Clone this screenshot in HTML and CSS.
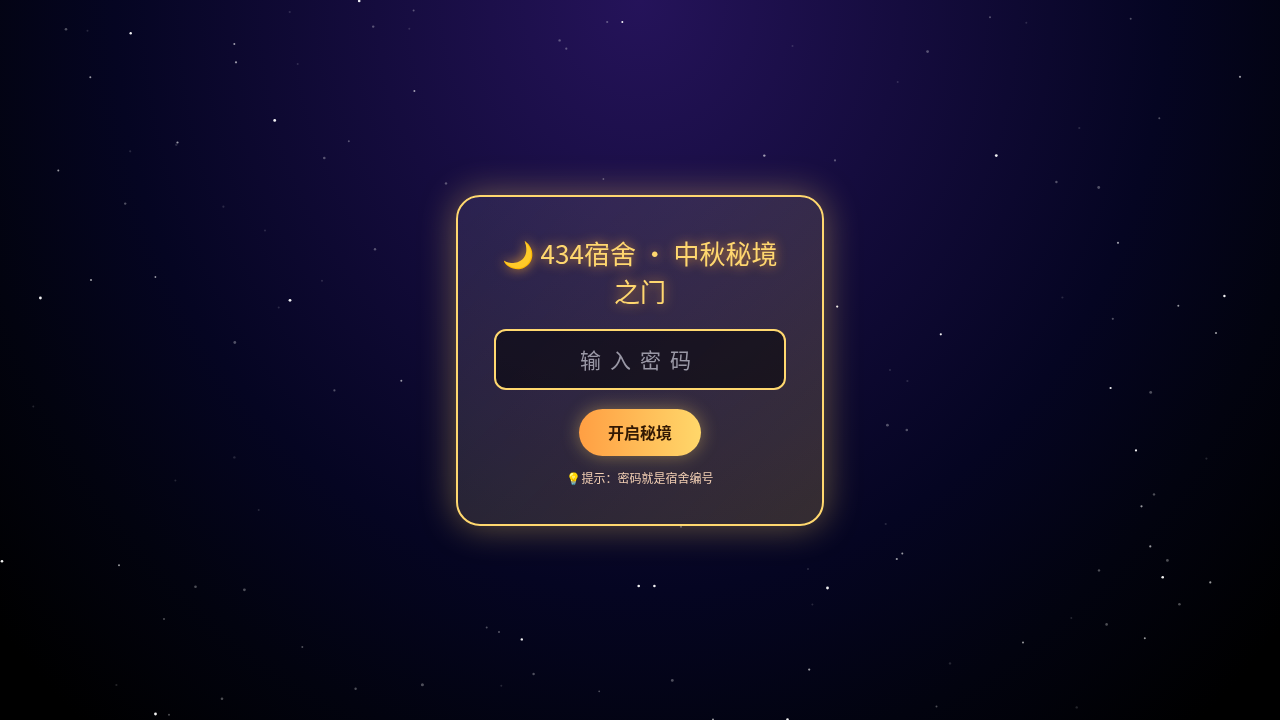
FILE: index.html
```html
<!DOCTYPE html>
<html lang="zh-CN">
<head>
<meta charset="UTF-8">
<meta name="viewport" content="width=device-width, initial-scale=1">
<title>434宿舍 · 中秋秘境之门</title>
<link rel="stylesheet" href="styles.css">
</head>
<body>
<svg class="sky" viewBox="0 0 1280 720" preserveAspectRatio="xMidYMid slice" aria-hidden="true">
  <g class="stars stars-bright">
    <circle cx="130.7" cy="33.3" r="1.2"/><circle cx="359.2" cy="1" r="1.3"/><circle cx="274.7" cy="120.4" r="1.4"/>
    <circle cx="40.4" cy="298" r="1.4"/><circle cx="290" cy="300.3" r="1.4"/><circle cx="2" cy="561.3" r="1.3"/>
    <circle cx="155.5" cy="714" r="1.4"/><circle cx="638.7" cy="586" r="1.3"/><circle cx="654.4" cy="586" r="1.3"/>
    <circle cx="827.5" cy="588" r="1.4"/><circle cx="521.8" cy="639.4" r="1.2"/><circle cx="787.5" cy="719.5" r="1.3"/>
    <circle cx="996.3" cy="155.6" r="1.4"/><circle cx="1224.4" cy="296" r="1.2"/><circle cx="1162.7" cy="577.2" r="1.3"/>
    <circle cx="1110.6" cy="388" r="1.1"/><circle cx="1136" cy="450.4" r="1.1"/><circle cx="837.2" cy="306.6" r="1.1"/>
    <circle cx="622.3" cy="22" r="1"/><circle cx="940.8" cy="334.3" r="1.1"/>
  </g>
  <g class="stars stars-medium">
    <circle cx="236" cy="62.3" r="1.1"/><circle cx="177.5" cy="142.5" r="1.1"/><circle cx="90.3" cy="77.2" r="1"/>
    <circle cx="58.3" cy="170.4" r="1"/><circle cx="91" cy="280" r="1.1"/><circle cx="155.4" cy="277" r=".9"/>
    <circle cx="401.3" cy="380.7" r="1"/><circle cx="119" cy="565.2" r="1"/><circle cx="414.4" cy="91" r="1"/>
    <circle cx="764.3" cy="155.6" r="1.2"/><circle cx="809.2" cy="669.6" r="1.1"/><circle cx="1240" cy="76.8" r="1.1"/>
    <circle cx="1178.3" cy="305.7" r="1"/><circle cx="1216" cy="333" r="1.1"/><circle cx="1141.5" cy="506.3" r="1.1"/>
    <circle cx="1150.3" cy="546.4" r="1.1"/><circle cx="1210.3" cy="582.4" r="1.1"/><circle cx="902.3" cy="553.6" r="1"/>
    <circle cx="896.8" cy="559" r="1.1"/><circle cx="1144.8" cy="638.3" r="1"/><circle cx="1023" cy="642.4" r="1"/>
    <circle cx="1118" cy="242.8" r="1.1"/><circle cx="234.3" cy="44" r="1"/><circle cx="713" cy="719.5" r="1"/>
  </g>
  <g class="stars stars-dim">
    <circle cx="66" cy="29.3" r="1.3"/><circle cx="324.3" cy="158" r="1.3"/><circle cx="125.2" cy="203.6" r="1.2"/>
    <circle cx="373.2" cy="26.6" r="1.2"/><circle cx="413.6" cy="10.4" r="1"/><circle cx="348.8" cy="141.2" r="1"/>
    <circle cx="375" cy="249.3" r="1.2"/><circle cx="234.8" cy="342.5" r="1.4"/><circle cx="334.4" cy="390.4" r="1.1"/>
    <circle cx="195.5" cy="586.7" r="1.3"/><circle cx="244.4" cy="589.8" r="1.4"/><circle cx="164" cy="619" r="1"/>
    <circle cx="302.3" cy="647" r="1"/><circle cx="222" cy="698.7" r="1.3"/><circle cx="169" cy="714.7" r="1"/>
    <circle cx="355.6" cy="688.8" r="1.2"/><circle cx="422.4" cy="684.8" r="1.5"/><circle cx="607.2" cy="22" r="1.1"/>
    <circle cx="559.6" cy="40.4" r="1.2"/><circle cx="566.3" cy="48.7" r="1.1"/><circle cx="835" cy="160.4" r="1.1"/>
    <circle cx="446" cy="183.4" r="1.2"/><circle cx="603.4" cy="179" r=".9"/><circle cx="681" cy="526.7" r="1.1"/>
    <circle cx="486.7" cy="627.4" r="1"/><circle cx="499" cy="632" r="1.1"/><circle cx="533.6" cy="674" r="1.2"/>
    <circle cx="672.3" cy="680.4" r="1.4"/><circle cx="599.2" cy="691.3" r=".9"/><circle cx="927.6" cy="51.6" r="1.4"/>
    <circle cx="990" cy="17.2" r="1"/><circle cx="1130.7" cy="18.7" r="1"/><circle cx="1056.4" cy="182" r="1.2"/>
    <circle cx="1098.7" cy="187.5" r="1.4"/><circle cx="1159.3" cy="118.2" r="1"/><circle cx="887.4" cy="425.2" r="1.4"/>
    <circle cx="906.8" cy="430" r="1.3"/><circle cx="1150.7" cy="392.4" r="1.4"/><circle cx="1112.8" cy="318.8" r="1.1"/>
    <circle cx="1154" cy="494.4" r="1.2"/><circle cx="1167.4" cy="560.4" r="1.4"/><circle cx="1099" cy="570.4" r="1.2"/>
    <circle cx="1179.4" cy="604.3" r="1.3"/><circle cx="1106.6" cy="624.4" r="1.3"/><circle cx="936.5" cy="706.6" r="1"/>
  </g>
  <g class="stars stars-faint">
    <circle cx="87.5" cy="30.7" r="1"/><circle cx="289.7" cy="12" r="1.1"/><circle cx="297.7" cy="64" r="1"/>
    <circle cx="409.3" cy="28.7" r="1"/><circle cx="130.2" cy="151.3" r="1.1"/><circle cx="176.3" cy="144.8" r="1.2"/>
    <circle cx="223.4" cy="206.7" r="1.1"/><circle cx="265" cy="230.4" r="1"/><circle cx="322" cy="280.7" r="1"/>
    <circle cx="278.7" cy="307.4" r="1"/><circle cx="33.3" cy="406.5" r="1"/><circle cx="234.4" cy="457.4" r="1.2"/>
    <circle cx="175.4" cy="480.5" r="1"/><circle cx="258.7" cy="510" r="1"/><circle cx="116.4" cy="685" r="1.1"/>
    <circle cx="792.5" cy="46" r="1"/><circle cx="808" cy="569" r="1.1"/><circle cx="812.4" cy="604.6" r="1"/>
    <circle cx="501.3" cy="685.7" r="1"/><circle cx="1026.3" cy="22.7" r="1"/><circle cx="897.7" cy="82" r="1"/>
    <circle cx="1079.3" cy="128" r="1.1"/><circle cx="1062.4" cy="297.5" r="1.1"/><circle cx="907.4" cy="381" r="1.1"/>
    <circle cx="890" cy="370" r="1"/><circle cx="1206.4" cy="458.6" r="1.1"/><circle cx="885.7" cy="524" r="1.1"/>
    <circle cx="1071.3" cy="618" r="1"/><circle cx="950" cy="663.4" r="1.2"/><circle cx="1076.7" cy="707.4" r="1.2"/>
  </g>
</svg>
<main class="page">
  <form class="card">
    <h1 class="title">🌙 434宿舍 · 中秋秘境之门</h1>
    <input class="password" type="password" placeholder="输入密码" aria-label="输入密码">
    <button class="enter" type="button">开启秘境</button>
    <p class="hint">💡提示：密码就是宿舍编号</p>
  </form>
</main>
</body>
</html>
```

FILE: styles.css
```css
* {
  box-sizing: border-box;
}

body {
  margin: 0;
  min-height: 100vh;
  overflow-x: hidden;
  background: radial-gradient(ellipse at top, #25135a 0%, #050522 58%, #02030f 76%, #000 94%) no-repeat #000;
  font-family: "Noto Sans CJK SC", "Noto Color Emoji", sans-serif;
}

.sky {
  position: fixed;
  inset: 0;
  width: 100%;
  height: 100%;
}

.stars {
  fill: #fff;
}

.stars-bright {
  opacity: 0.95;
}

.stars-medium {
  opacity: 0.6;
}

.stars-dim {
  opacity: 0.3;
}

.stars-faint {
  opacity: 0.14;
}

.page {
  position: relative;
  display: flex;
  align-items: center;
  justify-content: center;
  min-height: 100vh;
}

.card {
  display: flex;
  flex-direction: column;
  align-items: center;
  width: 368px;
  max-width: 100%;
  padding: 37px 36px;
  border: 2px solid #ffd86f;
  border-radius: 24px;
  background: linear-gradient(135deg, rgba(255, 255, 255, 0.09), rgba(255, 215, 100, 0.19)) border-box;
  box-shadow: 0 0 36px rgba(255, 215, 100, 0.4);
  text-align: center;
}

.title {
  margin: 0 0 19px;
  color: #ffd76f;
  font-size: 26px;
  font-weight: 400;
  line-height: 38px;
  text-shadow: 0 0 12px rgba(255, 170, 50, 0.8);
}

.password {
  width: 100%;
  height: 61px;
  padding: 0 14px;
  border: 2px solid #ffd86f;
  border-radius: 12px;
  outline: none;
  background: rgba(0, 0, 0, 0.5);
  color: #fff;
  font-family: inherit;
  font-size: 21px;
  letter-spacing: 9px;
  text-align: center;
}

.password::placeholder {
  color: #9a98a6;
}

.enter {
  height: 47px;
  margin-top: 19px;
  padding: 0 29px;
  border: 0;
  border-radius: 30px;
  background: linear-gradient(90deg, #ff9f43, #ffd76a);
  box-shadow: 0 0 18px rgba(255, 215, 100, 0.4);
  color: #321803;
  font-family: inherit;
  font-size: 16px;
  font-weight: 700;
  cursor: pointer;
}

.hint {
  margin: 13px 0 0;
  color: #f2cfb4;
  font-size: 12px;
  line-height: 18px;
}
```
